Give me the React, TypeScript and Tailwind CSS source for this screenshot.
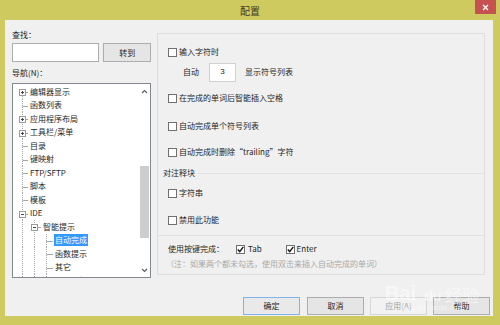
import React from 'react';

type Kind = 'plus' | 'minus' | 'leaf';

interface Node {
  text: string;
  level: number;
  kind: Kind;
  selected?: boolean;
}

const nodes: Node[] = [
  { text: '编辑器显示', level: 0, kind: 'plus' },
  { text: '函数列表', level: 0, kind: 'leaf' },
  { text: '应用程序布局', level: 0, kind: 'plus' },
  { text: '工具栏/菜单', level: 0, kind: 'plus' },
  { text: '目录', level: 0, kind: 'leaf' },
  { text: '键映射', level: 0, kind: 'leaf' },
  { text: 'FTP/SFTP', level: 0, kind: 'leaf' },
  { text: '脚本', level: 0, kind: 'leaf' },
  { text: '模板', level: 0, kind: 'leaf' },
  { text: 'IDE', level: 0, kind: 'minus' },
  { text: '智能提示', level: 1, kind: 'minus' },
  { text: '自动完成', level: 2, kind: 'leaf', selected: true },
  { text: '函数提示', level: 2, kind: 'leaf' },
  { text: '其它', level: 2, kind: 'leaf' },
  { text: '语法分析器', level: 2, kind: 'leaf' },
];

const guideX = [9.5, 21.5, 33.5];
const textX = [16, 29, 41];

const TreeRow = ({ node, first }: { node: Node; first: boolean }) => {
  const h = 13.5;
  const mid = 7;
  const cx = guideX[node.level];
  const line = '#a5a5a5';
  return (
    <div className="flex items-center h-[13.5px]">
      <svg width={textX[node.level]} height={h} className="shrink-0">
        {/* ancestor lines */}
        {guideX.slice(0, node.level).map((x) => (
          <line key={x} x1={x} y1={0} x2={x} y2={h} stroke={line} strokeDasharray="1 1" />
        ))}
        {/* own line */}
        <line x1={cx} y1={first ? mid : 0} x2={cx} y2={h} stroke={line} strokeDasharray="1 1" />
        {node.kind === 'minus' && (
          <line x1={guideX[node.level + 1]} y1={mid} x2={guideX[node.level + 1]} y2={h} stroke={line} strokeDasharray="1 1" />
        )}
        <line x1={cx} y1={mid + 0.5} x2={textX[node.level] - 1} y2={mid + 0.5} stroke={line} />
        {node.kind !== 'leaf' && (
          <g>
            <rect x={cx - 3} y={mid - 2.5} width={6} height={6} fill="#fff" stroke="#9a9a9a" />
            <line x1={cx - 1.5} y1={mid + 0.5} x2={cx + 1.5} y2={mid + 0.5} stroke="#444" />
            {node.kind === 'plus' && <line x1={cx} y1={mid - 1} x2={cx} y2={mid + 2} stroke="#444" />}
          </g>
        )}
      </svg>
      <span
        className={
          node.selected
            ? 'bg-[#3399ff] text-white px-[1px] leading-[12px]'
            : 'text-[#1e1e1e] px-[1px] leading-[12px]'
        }
      >
        {node.text}
      </span>
    </div>
  );
};

const Check = ({ checked = false }: { checked?: boolean }) => (
  <span className="w-[9px] h-[9px] border border-[#707070] bg-white flex items-center justify-center shrink-0">
    {checked && (
      <svg width="7" height="7" viewBox="0 0 7 7">
        <path d="M0.8 3.6 L2.7 5.6 L6.3 0.9" fill="none" stroke="#111" strokeWidth="1.4" />
      </svg>
    )}
  </span>
);

const CheckRow = ({ label, className }: { label: React.ReactNode; className: string }) => (
  <div className={`flex items-center h-[14px] pl-[10px] gap-[2px] ${className}`}>
    <Check />
    <span className="text-[#1e1e1e]">{label}</span>
  </div>
);

const Btn = ({ label, className }: { label: string; className: string }) => (
  <div className={`w-[57px] h-[18px] flex items-center justify-center border ${className}`}>{label}</div>
);

const App = () => {
  return (
    <div className="w-[500px] h-[325px] bg-[#cfca5f] flex flex-col text-[8px] font-['Noto_Sans_CJK_SC','Noto_Sans',sans-serif] overflow-hidden relative">
      {/* title bar */}
      <div className="h-[20px] relative flex items-center justify-center">
        <span className="text-[10px] text-[#3a3a2a] mt-[1px]">配置</span>
        <div className="absolute right-[4px] top-0 w-[21px] h-[14px] bg-[#c75050] flex items-center justify-center">
          <svg width="7" height="7" viewBox="0 0 7 7">
            <path d="M1 1 L6 6 M6 1 L1 6" stroke="#fff" strokeWidth="1.4" />
          </svg>
        </div>
      </div>

      {/* client */}
      <div className="ml-[5px] w-[488px] h-[296px] bg-[#f0f0f0] flex flex-col">
        <div className="flex pl-[7px] pt-[9px]">
          {/* left column */}
          <div className="w-[139px] flex flex-col">
            <div className="h-[12px] leading-[12px] text-[#1e1e1e]">查找：</div>
            <div className="mt-[2px] h-[19px] flex">
              <div className="w-[105px] h-[19px] bg-white border border-[#abadb3]" />
              <Btn label="转到" className="ml-[4px] w-[27px] h-[19px] bg-[#e5e5e5] border-[#adadad] text-[#1e1e1e]" />
            </div>
            <div className="mt-[5px] h-[12px] leading-[12px] text-[#1e1e1e]">导航(N)：</div>
            <div className="mt-[4px] h-[195px] bg-white border border-[#828790] flex">
              <div className="flex-1 pt-[1px] overflow-hidden">
                {nodes.map((n, i) => (
                  <TreeRow key={n.text} node={n} first={i === 0} />
                ))}
              </div>
              <div className="w-[12px] flex flex-col">
                <div className="h-[14px] flex items-center justify-center">
                  <svg width="7" height="5" viewBox="0 0 7 5">
                    <path d="M1 4 L3.5 1.5 L6 4" fill="none" stroke="#606060" strokeWidth="1.2" />
                  </svg>
                </div>
                <div className="flex-1 flex flex-col items-center">
                  <div className="mt-[68px] w-[9px] h-[72px] bg-[#cdcdcd]" />
                </div>
                <div className="h-[14px] flex items-center justify-center">
                  <svg width="7" height="5" viewBox="0 0 7 5">
                    <path d="M1 1 L3.5 3.5 L6 1" fill="none" stroke="#606060" strokeWidth="1.2" />
                  </svg>
                </div>
              </div>
            </div>
          </div>

          {/* right pane */}
          <div className="ml-[6px] mt-[4px] w-[328px] h-[242px] border border-[#dedede] flex flex-col pt-[11px]">
            <CheckRow label="输入字符时" className="" />
            <div className="mt-[3px] h-[20px] flex items-center">
              <span className="ml-[25px] text-[#1e1e1e]">自动</span>
              <div className="ml-[10px] w-[27px] h-[19px] bg-white border border-[#d0d0d0] flex items-center justify-center text-[#1e1e1e] font-['Liberation_Sans',sans-serif]">
                3
              </div>
              <span className="ml-[9px] text-[#1e1e1e]">显示符号列表</span>
            </div>
            <CheckRow label="在完成的单词后智能插入空格" className="mt-[9px]" />
            <CheckRow label="自动完成单个符号列表" className="mt-[14px]" />
            <CheckRow label="自动完成时删除“trailing”字符" className="mt-[12px]" />
            <div className="mt-[7px] h-[14px] flex items-center">
              <span className="ml-[5px] text-[#1e1e1e]">对注释块</span>
              <div className="flex-1 ml-[3px] h-px bg-[#e2e2e2]" />
            </div>
            <CheckRow label="字符串" className="mt-[6px]" />
            <CheckRow label="禁用此功能" className="mt-[13px]" />
            <div className="mt-[8px] h-px bg-[#e2e2e2]" />
            <div className="mt-[6px] h-[14px] flex items-center pl-[10px]">
              <span className="w-[68px] text-[#1e1e1e]">使用按键完成：</span>
              <Check checked />
              <span className="ml-[3px] text-[#1e1e1e]">Tab</span>
              <span className="ml-[24px]">
                <Check checked />
              </span>
              <span className="ml-[2px] text-[#1e1e1e]">Enter</span>
            </div>
            <div className="mt-[1px] h-[14px] flex items-center pl-[8px] text-[#a8a8a8]">
              （注：如果两个都未勾选，使用双击来插入自动完成的单词）
            </div>
          </div>
        </div>

        {/* buttons */}
        <div className="mt-[19px] flex pl-[238px]">
          <Btn label="确定" className="bg-[#e9e9e9] border-[#7eb4ea] text-[#1e1e1e]" />
          <Btn label="取消" className="ml-[7px] bg-[#e5e5e5] border-[#adadad] text-[#1e1e1e]" />
          <Btn label="应用(A)" className="ml-[6px] bg-[#f2f2f2] border-[#d6d6d6] text-[#a0a0a0]" />
          <Btn label="帮助" className="ml-[6px] bg-[#e5e5e5] border-[#adadad] text-[#1e1e1e]" />
        </div>
      </div>

      {/* watermark */}
      <div className="absolute left-[385px] top-[283px] flex flex-col items-center text-white opacity-50 pointer-events-none">
        <div className="flex items-end leading-none">
          <span className="text-[20px] font-bold font-['Liberation_Sans',sans-serif]">Bai</span>
          <span className="text-[14px] font-bold font-['Liberation_Sans',sans-serif] ml-[8px]">du</span>
          <span className="text-[17px] ml-[4px]">经验</span>
        </div>
        <span className="text-[8px] leading-none mt-[1px] font-['Liberation_Sans',sans-serif]">jingyan.baidu.com</span>
      </div>
    </div>
  );
};

export default App;
